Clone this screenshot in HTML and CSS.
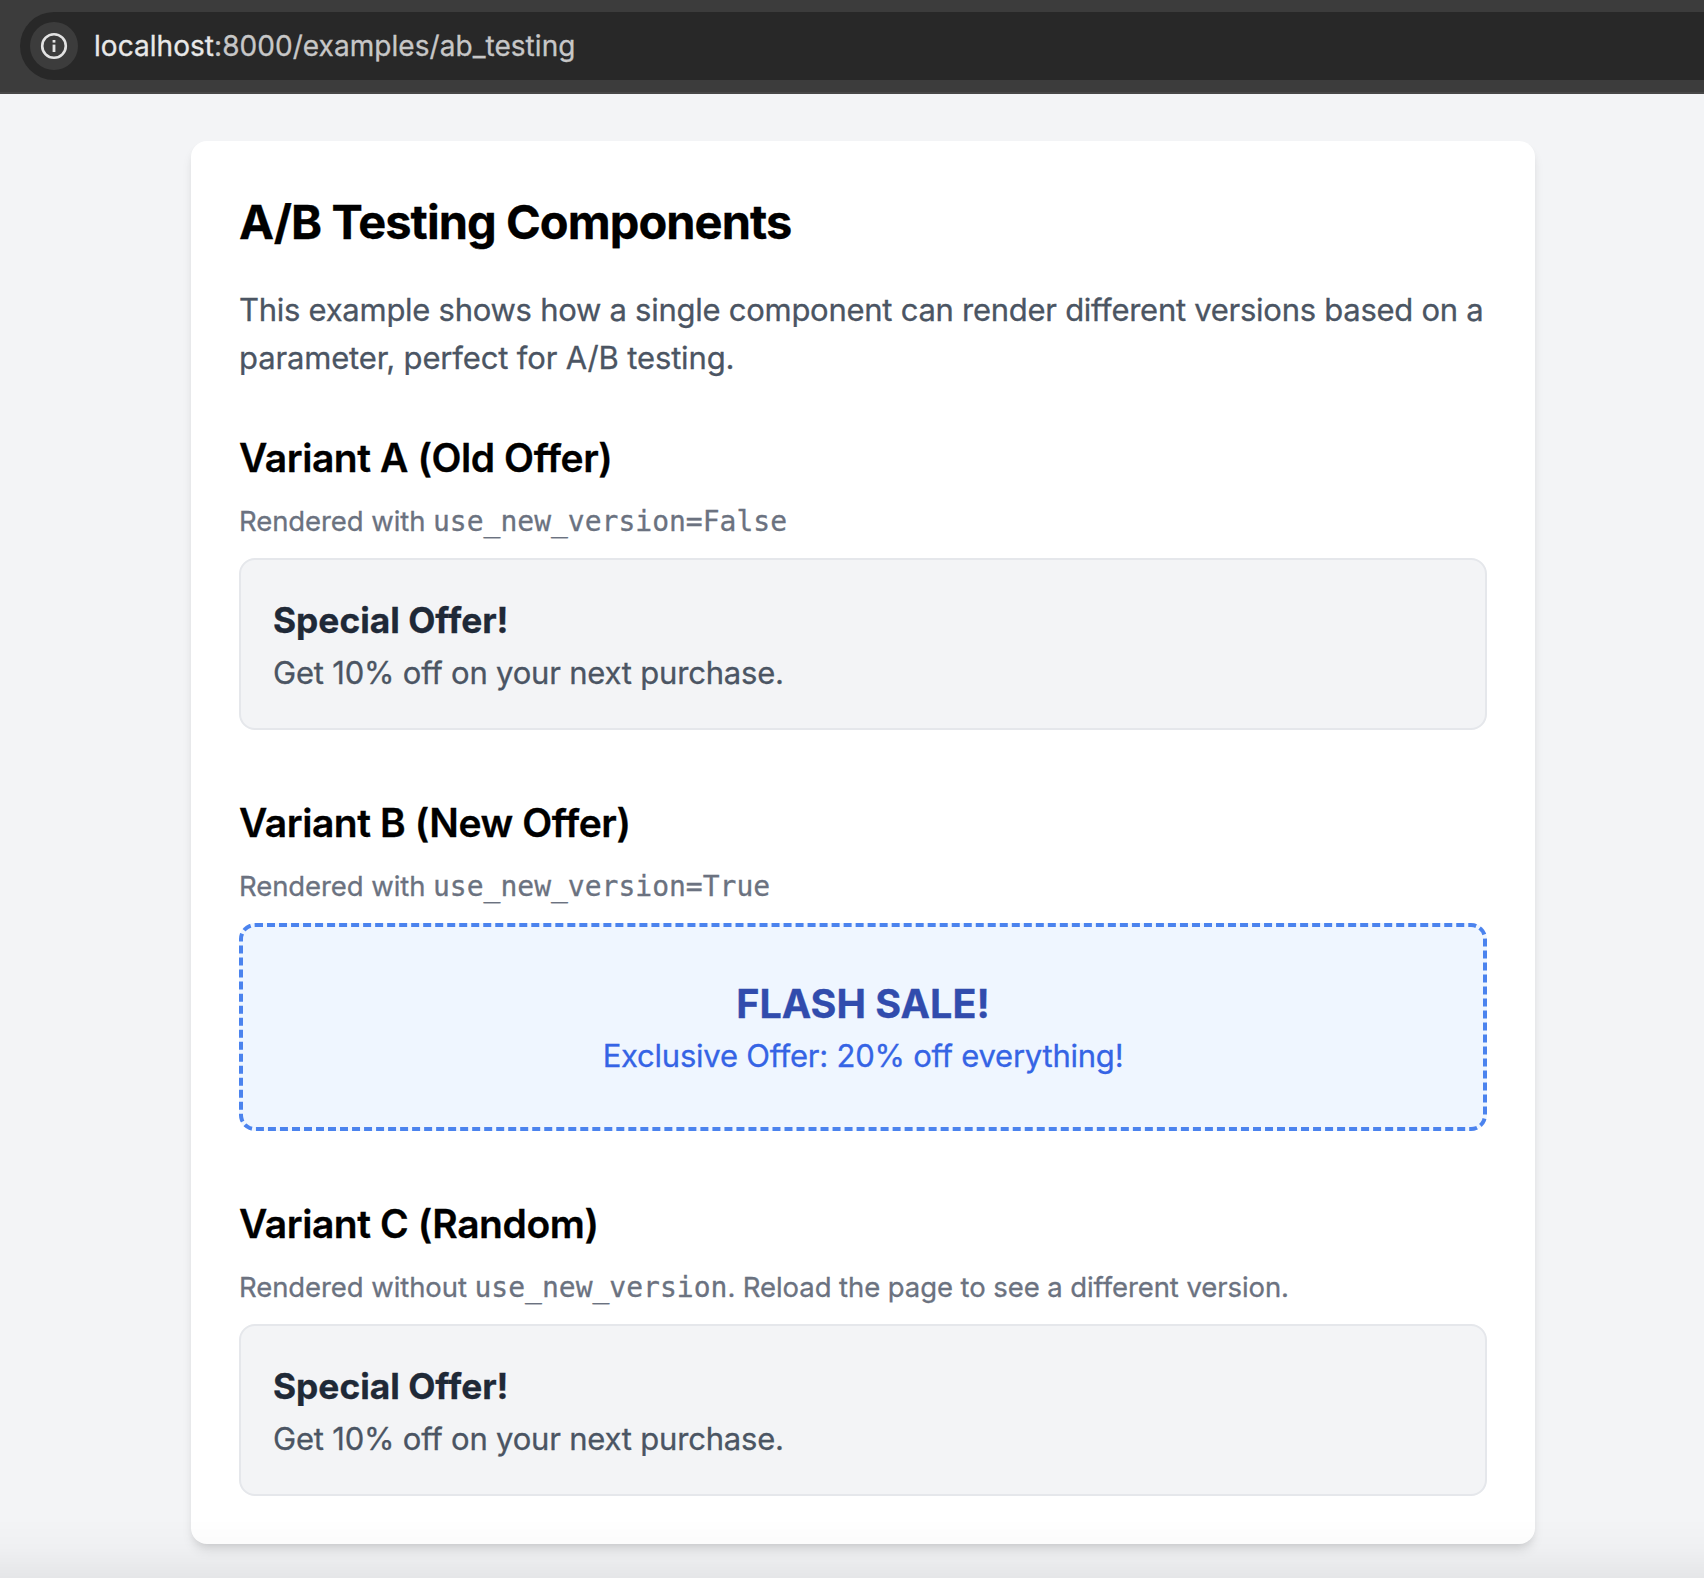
FILE: index.html
```html
<!DOCTYPE html>
<html lang="en">
<head>
<meta charset="utf-8">
<title>A/B Testing Components</title>
<link rel="stylesheet" href="styles.css">
</head>
<body>
<header class="toolbar">
  <div class="address">
    <span class="site-info">
      <svg width="28" height="28" viewBox="0 0 28 28" fill="none" stroke="#e3e3e3" aria-hidden="true">
        <circle cx="14" cy="14" r="11.8" stroke-width="2.6"/>
        <path d="M14 12.6v7.4" stroke-width="2.8"/>
        <path d="M14 8v2.6" stroke-width="2.8"/>
      </svg>
    </span>
    <span class="url"><span class="host">localhost</span>:8000/examples/ab_testing</span>
  </div>
</header>
<main class="page">
  <article class="card">
    <h1 class="title">A/B Testing Components</h1>
    <p class="intro">This example shows how a single component can render different versions based on a <span class="intro-end">parameter, perfect for A/B testing.</span></p>

    <section class="variant">
      <h2 class="variant-title">Variant A (Old Offer)</h2>
      <p class="note">Rendered with <code class="code">use_new_version=False</code></p>
      <div class="offer">
        <h3 class="offer-title">Special Offer!</h3>
        <p class="offer-text">Get 10% off on your next purchase.</p>
      </div>
    </section>

    <section class="variant">
      <h2 class="variant-title">Variant B (New Offer)</h2>
      <p class="note">Rendered with <code class="code">use_new_version=True</code></p>
      <div class="sale">
        <h3 class="sale-title">FLASH SALE!</h3>
        <p class="sale-text">Exclusive Offer: 20% off everything!</p>
      </div>
    </section>

    <section class="variant">
      <h2 class="variant-title">Variant C (Random)</h2>
      <p class="note">Rendered without <code class="code">use_new_version</code>. Reload the page to see a different version.</p>
      <div class="offer">
        <h3 class="offer-title">Special Offer!</h3>
        <p class="offer-text">Get 10% off on your next purchase.</p>
      </div>
    </section>
  </article>
</main>
</body>
</html>
```
FILE: styles.css
```css
* { box-sizing: border-box; margin: 0; padding: 0; }

body {
  height: 1578px;
  overflow: hidden;
  background: #f3f4f6;
  color: #000;
  font-family: Inter, "Liberation Sans", sans-serif;
  -webkit-text-stroke: 0.3px currentColor;
}

.toolbar {
  height: 94px;
  padding: 12px 0 12px 20px;
  background: #3c3c3c;
  border-bottom: 2px solid #474747;
}

.address {
  display: flex;
  align-items: center;
  gap: 16px;
  height: 68px;
  padding-left: 10px;
  border-radius: 34px 0 0 34px;
  background: #282828;
}

.site-info {
  display: grid;
  place-items: center;
  width: 48px;
  height: 48px;
  border-radius: 50%;
  background: #3c3c3c;
}

.url {
  color: #c7c7c7;
  font-size: 28px;
  letter-spacing: 0.05px;
}

.host { color: #e8e8e8; }

.page {
  display: flex;
  justify-content: center;
  margin-left: 22px;
  padding: 47px 0 34px;
}

/* soft darkening along the lower window edge */
.page::after {
  content: "";
  position: fixed;
  inset: auto 0 0 0;
  height: 60px;
  background: linear-gradient(rgba(0, 0, 0, 0), rgba(0, 0, 0, 0.015) 50%, rgba(0, 0, 0, 0.055));
}

.card {
  width: 1344px;
  padding: 49px 48px 48px;
  border-radius: 16px;
  background: #fff;
  box-shadow: 0 8px 12px -2px rgba(0, 0, 0, 0.1), 0 4px 8px -4px rgba(0, 0, 0, 0.1);
}

.title {
  margin-bottom: 32px;
  font-size: 47px;
  font-weight: 700;
  line-height: 64px;
  letter-spacing: -0.93px;
}

.intro {
  margin-bottom: 48px;
  color: #4b5563;
  font-size: 31px;
  line-height: 48px;
  letter-spacing: -0.268px;
}

.intro-end { letter-spacing: -0.152px; }

.variant + .variant { margin-top: 65px; }

.variant-title {
  margin-bottom: 15px;
  font-size: 39px;
  font-weight: 600;
  line-height: 56px;
  letter-spacing: -0.43px;
}

.note {
  height: 41px;
  margin-bottom: 16px;
  color: #6b7280;
  font-size: 27.5px;
  line-height: 40px;
  letter-spacing: -0.08px;
}

.code {
  font-family: "DejaVu Sans Mono", monospace;
  font-size: 28px;
  line-height: 1;
  letter-spacing: 0;
}

.offer {
  padding: 33px 32px 31px;
  border: 2px solid #e5e7eb;
  border-radius: 16px;
  background: #f3f4f6;
}

.offer-title {
  color: #1f2937;
  font-size: 35.3px;
  font-weight: 700;
  line-height: 56px;
}

.offer-text {
  color: #4b5563;
  font-size: 31px;
  line-height: 48px;
  letter-spacing: -0.2px;
}

.sale {
  padding: 49px 48px 47px;
  border: 4px dashed #4b83ee;
  border-radius: 16px;
  background: #eff6ff;
  text-align: center;
}

.sale-title {
  color: #314cad;
  font-size: 39.5px;
  font-weight: 700;
  line-height: 56px;
}

.sale-text {
  color: #3564e5;
  font-size: 31px;
  line-height: 48px;
  letter-spacing: -0.234px;
}
```
